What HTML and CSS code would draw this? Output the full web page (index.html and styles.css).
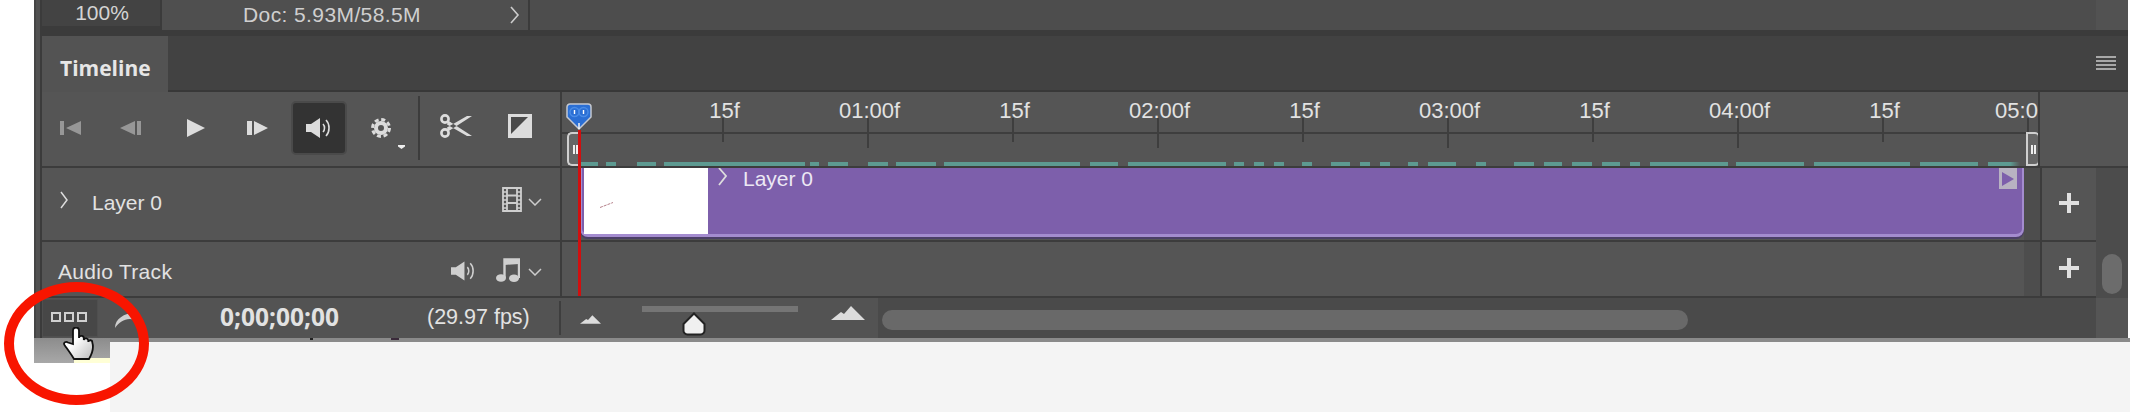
FILE: index.html
```html
<!DOCTYPE html>
<html lang="en">
<head>
    <meta charset="UTF-8">
    <title>Timeline</title>
    <link rel="stylesheet" href="styles.css">
</head>
<body>
    <div class="panel">
        <div class="panel-body">
            <div class="status">
                <div class="zoom-field">100%</div>
                <div class="doc-field">
                    <span>Doc: 5.93M/58.5M</span>
                    <svg class="doc-arrow" width="10" height="18" viewBox="0 0 10 18"><path d="M1 1l7 8-7 8" fill="none" stroke="#ccc" stroke-width="1.6"/></svg>
                </div>
                <div class="status-rest"></div>
                <div class="status-end"></div>
            </div>
            <div class="tabs">
                <div class="tab">Timeline</div>
                <div class="tabs-rest">
                    <div class="menu-icon"><i></i><i></i><i></i><i></i></div>
                </div>
            </div>

            <div class="ctl-row">
                <div class="controls">
                    <svg class="ic-first" width="21" height="16" viewBox="0 0 21 16"><path d="M0 1h4v14H0zM21 1v14L6 8z" fill="#979797"/></svg>
                    <svg class="ic-prev" width="21" height="16" viewBox="0 0 21 16"><path d="M15 1v14L0 8zM17 1h4v14h-4z" fill="#979797"/></svg>
                    <svg class="ic-play" width="18" height="18" viewBox="0 0 18 18"><path d="M0 0l18 9L0 18z" fill="#dcdcdc"/></svg>
                    <svg class="ic-next" width="21" height="16" viewBox="0 0 21 16"><path d="M0 1h5v14H0zM7 1l14 7-14 7z" fill="#dcdcdc"/></svg>
                    <div class="audio-btn">
                        <svg width="26" height="20" viewBox="0 0 26 20"><path d="M0 6h5l9-6v20l-9-6H0z" fill="#dcdcdc"/><path d="M17 6c2 2 2 6 0 8M20 2c4 4 4 12 0 16" fill="none" stroke="#dcdcdc" stroke-width="1.6"/></svg>
                    </div>
                    <svg class="ic-gear" width="20" height="20" viewBox="0 0 20 20"><circle cx="10" cy="10" r="5" fill="none" stroke="#dcdcdc" stroke-width="4"/><circle cx="10" cy="10" r="8.5" fill="none" stroke="#dcdcdc" stroke-width="3" stroke-dasharray="4 2.67"/></svg>
                    <svg class="ic-tri" width="7" height="4" viewBox="0 0 7 4"><path d="M0 0h7v1.500L3.500 4 0 1.500z" fill="#eee"/></svg>
                    <div class="ctl-sep"></div>
                    <svg class="ic-scissors" width="32" height="24" viewBox="0 0 32 24"><circle cx="5" cy="5" r="3.600" fill="none" stroke="#dcdcdc" stroke-width="2.600"/><circle cx="5" cy="19" r="3.600" fill="none" stroke="#dcdcdc" stroke-width="2.600"/><path d="M8 6.500L32 22h-5L7 10.500zM8 17.500L32 2h-5L7 13.500z" fill="#dcdcdc"/></svg>
                    <svg class="ic-trans" width="24" height="24" viewBox="0 0 24 24"><path d="M0 0h24v24H0z" fill="#dcdcdc"/><path d="M3 3h17L3 20z" fill="#4a4a4a"/></svg>
                </div>
                <div class="ruler">
                    <div class="ruler-line"></div>
                    <div class="cell"><span>15f</span><i></i></div>
                    <div class="cell major"><span>01:00f</span><i></i></div>
                    <div class="cell"><span>15f</span><i></i></div>
                    <div class="cell major"><span>02:00f</span><i></i></div>
                    <div class="cell"><span>15f</span><i></i></div>
                    <div class="cell major"><span>03:00f</span><i></i></div>
                    <div class="cell"><span>15f</span><i></i></div>
                    <div class="cell major"><span>04:00f</span><i></i></div>
                    <div class="cell"><span>15f</span><i></i></div>
                    <div class="cell major cell-last"><span>05:0</span><i></i></div>
                    <svg class="work-bar" width="1478" height="4" viewBox="562 0 1478 4">
                        <defs><linearGradient id="fadeEnd"><stop offset="0.700" stop-color="#5d9a91"/><stop offset="1" stop-color="#5d9a91" stop-opacity="0"/></linearGradient></defs>
                        <g fill="#5d9a91"><rect x="580" width="18" height="4"/><rect x="606" width="10" height="4"/><rect x="637" width="19" height="4"/><rect x="664" width="141" height="4"/><rect x="810" width="9" height="4"/><rect x="828" width="20" height="4"/><rect x="868" width="20" height="4"/><rect x="896" width="40" height="4"/><rect x="944" width="136" height="4"/><rect x="1090" width="28" height="4"/><rect x="1128" width="98" height="4"/><rect x="1234" width="10" height="4"/><rect x="1254" width="10" height="4"/><rect x="1274" width="10" height="4"/><rect x="1302" width="10" height="4"/><rect x="1331" width="19" height="4"/><rect x="1360" width="10" height="4"/><rect x="1380" width="10" height="4"/><rect x="1408" width="10" height="4"/><rect x="1428" width="28" height="4"/><rect x="1476" width="10" height="4"/><rect x="1514" width="20" height="4"/><rect x="1544" width="18" height="4"/><rect x="1572" width="20" height="4"/><rect x="1602" width="18" height="4"/><rect x="1630" width="10" height="4"/><rect x="1650" width="78" height="4"/><rect x="1736" width="68" height="4"/><rect x="1814" width="96" height="4"/><rect x="1920" width="58" height="4"/></g>
                        <rect x="1988" width="32" height="4" fill="url(#fadeEnd)"/>
                    </svg>
                    <div class="handle handle-in"><b></b></div>
                    <div class="handle handle-out"><b></b></div>
                </div>
                <div class="ctl-end"></div>
            </div>

            <div class="tracks">
                <div class="track-rows">
                    <div class="track track-video">
                        <div class="track-head">
                            <svg class="twisty" width="8" height="18" viewBox="0 0 8 18"><path d="M1 1l6 8-6 8" fill="none" stroke="#ddd" stroke-width="1.500"/></svg>
                            <span class="track-name">Layer 0</span>
                            <svg class="ic-film" width="20" height="25" viewBox="0 0 20 25"><path d="M1 1h18v23H1zM5 1v23M15 1v23M5 8.500h10M5 16h10" fill="none" stroke="#cfcfcf" stroke-width="1.800"/><path d="M1 5h4M1 9h4M1 13h4M1 17h4M1 21h4M15 5h4M15 9h4M15 13h4M15 17h4M15 21h4" stroke="#cfcfcf" stroke-width="1.300"/></svg>
                            <svg class="ic-down" width="14" height="8" viewBox="0 0 14 8"><path d="M1 1l6 6 6-6" fill="none" stroke="#ccc" stroke-width="1.500"/></svg>
                        </div>
                        <div class="track-body">
                            <div class="clip">
                                <div class="clip-thumb">
                                    <svg class="scribble" width="14" height="6" viewBox="0 0 14 6"><path d="M0 5.500L13 .5" stroke="#b5808a" stroke-width="1" stroke-dasharray="3 1"/></svg>
                                </div>
                                <svg class="clip-arrow" width="9" height="18" viewBox="0 0 9 18"><path d="M1 0l7 8-7 9" fill="none" stroke="#ddd" stroke-width="1.800"/></svg>
                                <span class="clip-name">Layer 0</span>
                                <div class="clip-end">
                                    <svg width="12" height="14" viewBox="0 0 12 14"><path d="M0 0l12 7-12 7z" fill="#7d5fab"/></svg>
                                </div>
                            </div>
                            <div class="track-end"></div>
                        </div>
                        <div class="track-add"><div class="plus"></div></div>
                    </div>
                    <div class="track track-audio">
                        <div class="track-head">
                            <span class="audio-name">Audio Track</span>
                            <svg class="ic-speaker" width="25" height="20" viewBox="0 0 26 20"><path d="M0 6h5l9-6v20l-9-6H0z" fill="#cfcfcf"/><path d="M17 6c2 2 2 6 0 8M20 2c4 4 4 12 0 16" fill="none" stroke="#cfcfcf" stroke-width="1.600"/></svg>
                            <svg class="ic-music" width="24" height="24" viewBox="0 0 24 24"><ellipse cx="5" cy="20" rx="5" ry="3.800" fill="#cfcfcf"/><ellipse cx="18" cy="20.200" rx="5" ry="3.800" fill="#cfcfcf"/><path d="M8.500 20V1.500H23V20" fill="none" stroke="#cfcfcf" stroke-width="2.400"/><path d="M8.500 2H23v4L8.500 7z" fill="#cfcfcf"/></svg>
                            <svg class="ic-down ic-down-audio" width="14" height="8" viewBox="0 0 14 8"><path d="M1 1l6 6 6-6" fill="none" stroke="#ccc" stroke-width="1.500"/></svg>
                        </div>
                        <div class="track-body">
                            <div class="track-fill"></div>
                            <div class="track-end"></div>
                        </div>
                        <div class="track-add"><div class="plus"></div></div>
                    </div>
                </div>
                <div class="vscroll"><div class="vscroll-thumb"></div></div>
            </div>

            <div class="bottom">
                <div class="bottom-left">
                    <div class="frames-btn"><i></i><i></i><i></i></div>
                    <svg class="ic-arc" width="20" height="15" viewBox="0 0 20 15"><path d="M0 15C0 6 9 0 20 0v7C12 4 5 8 0 15z" fill="#cfcfcf"/></svg>
                    <span class="timecode">0;00;00;00</span>
                    <span class="fps">(29.97 fps)</span>
                    <div class="bottom-sep"></div>
                    <svg class="ic-mtn-small" width="21" height="9" viewBox="0 0 34 14"><path d="M0 14l10-8 3 2 7-8 14 14z" fill="#dcdcdc"/></svg>
                    <div class="zoom-track">
                        <svg class="zoom-thumb" width="24" height="24" viewBox="0 0 24 24"><path d="M12 1.500L22.500 12v6a4 4 0 0 1-4 4.500h-13a4 4 0 0 1-4-4.500v-6z" fill="#f0f0f0" stroke="#222" stroke-width="2"/></svg>
                    </div>
                    <svg class="ic-mtn-big" width="34" height="14" viewBox="0 0 34 14"><path d="M0 14l10-8 3 2 7-8 14 14z" fill="#dcdcdc"/></svg>
                </div>
                <div class="hscroll"><div class="hscroll-thumb"></div></div>
                <div class="bottom-end"></div>
            </div>
        </div>

        <svg class="marker" width="26" height="27" viewBox="0 0 26 27"><path d="M4 1h18a3 3 0 0 1 3 3v10L13 26 1 14V4a3 3 0 0 1 3-3z" fill="#2b6fd4" stroke="#c4c8d0" stroke-width="1.500"/><circle cx="8.500" cy="9" r="4.500" fill="none" stroke="#4a8ce6" stroke-width="1.500"/><circle cx="17.500" cy="9" r="4.500" fill="none" stroke="#4a8ce6" stroke-width="1.500"/><path d="M8.500 7v4M17.500 7v4M13 20v6" stroke="#fff" stroke-width="1.400"/></svg>
        <div class="playhead"></div>
    </div>

    <div class="below">
        <div class="below-left">
            <div class="patch"><div class="patch-note"></div></div>
        </div>
        <div class="below-right">
            <div class="below-strip"><i></i><i></i></div>
        </div>
    </div>

    <svg class="hand" width="32" height="33" viewBox="0 0 32 33"><defs><linearGradient id="handFill" x1="0" y1="0" x2="1" y2="1"><stop offset="0.400" stop-color="#fff"/><stop offset="1" stop-color="#bbb"/></linearGradient></defs><path d="M10 17V3.500a3 3 0 0 1 6 0V11a2.400 2.400 0 0 1 4.800 .5V13a2.300 2.300 0 0 1 4.500 .5V15a2 2 0 0 1 4 .5C31 21 29 27 26 32H11C8 27 5 23 1.500 18 0 15.500 3 14 5 15.500z" fill="url(#handFill)" stroke="#111" stroke-width="1.800"/></svg>
    <div class="red-ring"></div>
</body>
</html>
```

FILE: styles.css
```css
* { box-sizing: border-box; }
body { margin: 0; width: 2130px; height: 412px; overflow: hidden; position: relative; background: #fff; font-family: "Liberation Sans", Arial, sans-serif; font-size: 21px; color: #e2e2e2; }
svg { display: block; flex: none; }

.panel { position: relative; margin-left: 34px; width: 2094px; height: 338px; background: #515151; border-left: 2px solid #454545; padding-left: 4px; }
.panel-body { height: 100%; border-left: 2px solid #3b3b3b; display: flex; flex-direction: column; }

/* status bar */
.status { height: 36px; flex: none; display: flex; background: #3b3b3b; }
.zoom-field { width: 118px; height: 26px; background: #434343; color: #d4d4d4; text-align: center; line-height: 26px; margin-right: 2px; padding-left: 2px; }
.doc-field { width: 366px; height: 30px; background: #4f4f4f; color: #cfcfcf; display: flex; align-items: center; padding-left: 81px; letter-spacing: 0.4px; }
.doc-arrow { margin-left: auto; margin-right: 8px; }
.status-rest { flex: 1; height: 30px; background: #4d4d4d; margin-left: 2px; }
.status-end { width: 32px; height: 30px; background: #525252; }

/* tab strip */
.tabs { height: 56px; flex: none; display: flex; background: #424242; }
.tab { width: 126px; background: #535353; padding-left: 18px; font-family: "Open Sans", sans-serif; font-weight: 700; font-size: 21px; line-height: 64px; color: #e6e6e6; }
.tabs-rest { flex: 1; border-bottom: 2px solid #383838; display: flex; justify-content: flex-end; padding: 20px 12px 0 0; }
.menu-icon { width: 20px; height: 14px; display: flex; flex-direction: column; justify-content: space-between; }
.menu-icon i { display: block; height: 2px; background: #a8a8a8; }

/* controls + ruler */
.ctl-row { height: 76px; flex: none; display: flex; background: #555; border-bottom: 2px solid #3c3c3c; }
.controls { width: 520px; flex: none; display: flex; align-items: center; padding-bottom: 2px; border-right: 2px solid #3c3c3c; }
.ic-first { margin-left: 18px; }
.ic-prev { margin-left: 39px; }
.ic-play { margin-left: 46px; }
.ic-next { margin-left: 42px; }
.audio-btn { margin-left: 23px; width: 56px; height: 54px; background: #333; border: 2px solid #4a4a4a; border-radius: 5px; display: flex; align-items: center; justify-content: center; }
.ic-gear { margin-left: 24px; }
.ic-tri { margin: 38px 0 0 7px; }
.ctl-sep { width: 2px; height: 64px; background: #3c3c3c; margin-left: 13px; }
.ic-scissors { margin-left: 20px; margin-top: -4px; }
.ic-trans { margin-left: 36px; margin-top: -4px; }

.ruler { position: relative; width: 1478px; flex: none; display: flex; padding-left: 90px; overflow: hidden; border-right: 2px solid #3c3c3c; font-size: 22px; }
.ruler-line { position: absolute; left: 0; right: 0; top: 40px; height: 2px; background: #3e3e3e; }
.cell { width: 145px; flex: none; display: flex; flex-direction: column; align-items: center; padding-top: 7px; }
.cell span { line-height: 24px; white-space: nowrap; }
.cell i { display: block; width: 2px; height: 24px; margin: -5px 3px 0 0; background: #3e3e3e; }
.cell.major i { height: 30px; }
.cell-last span { margin-right: 26px; }
.work-bar { position: absolute; left: 0; bottom: 0; }
.handle { position: absolute; top: 40px; width: 14px; height: 34px; background: #666; border: 2px solid #cfcfcf; display: flex; align-items: center; justify-content: center; }
.handle b { width: 5px; height: 9px; border-left: 2px solid #eee; border-right: 2px solid #eee; }
.handle-in { left: 5px; border-right: 0; border-radius: 5px 0 0 5px; }
.handle-out { left: 1464px; border-radius: 0 5px 5px 0; }
.ctl-end { flex: 1; }

/* tracks */
.tracks { height: 130px; flex: none; display: flex; }
.track-rows { flex: 1; display: flex; flex-direction: column; }
.track { display: flex; background: #555; border-bottom: 2px solid #3c3c3c; }
.track-video { height: 74px; }
.track-audio { height: 56px; }
.track-head { width: 520px; flex: none; display: flex; align-items: center; border-right: 2px solid #3c3c3c; }
.track-video .track-head { padding-bottom: 4px; }
.track-audio .track-head { padding-top: 5px; }
.twisty { margin-left: 18px; margin-top: -4px; }
.track-name { margin-left: 24px; margin-top: 2px; }
.ic-film { margin-left: auto; margin-top: -6px; }
.ic-down { margin-left: 6px; margin-right: 18px; }
.audio-name { margin-left: 16px; letter-spacing: 0.3px; }
.ic-speaker { margin-left: auto; margin-top: -2px; }
.ic-music { margin-left: 20px; margin-top: -4px; }
.ic-down-audio { margin-left: 8px; }

.track-body { width: 1478px; flex: none; display: flex; padding-left: 18px; }
.track-end { width: 16px; flex: none; background: #4d4d4d; margin-left: auto; }
.track-fill { flex: 1; }
.clip { position: relative; flex: 1; height: 69px; background: #7d5fab; border: solid #a48ccf; border-width: 0 2px 3px 2px; border-radius: 0 0 8px 8px; box-shadow: 0 2px 0 #4b3f66; display: flex; align-items: flex-start; }
.clip-thumb { width: 124px; height: 66px; background: #fff; margin-left: 2px; flex: none; padding: 34px 0 0 16px; }
.clip-arrow { margin-left: 10px; }
.clip-name { margin-left: 16px; line-height: 22px; color: #ece8f4; }
.clip-end { position: absolute; top: 0; right: 5px; width: 18px; height: 21px; background: #b8b2c2; display: flex; align-items: center; justify-content: center; }
.track-add { width: 56px; flex: none; border-left: 2px solid #3c3c3c; display: flex; align-items: center; justify-content: center; padding-bottom: 2px; }
.plus { width: 20px; height: 20px; background: linear-gradient(#e0e0e0, #e0e0e0) center / 20px 4px no-repeat, linear-gradient(#e0e0e0, #e0e0e0) center / 4px 20px no-repeat; }

.vscroll { width: 32px; flex: none; background: #4c4c4c; display: flex; justify-content: center; align-items: flex-end; padding: 0 0 4px 0; }
.vscroll-thumb { width: 20px; height: 40px; border-radius: 10px; background: #6c6c6c; }

/* bottom bar */
.bottom { height: 40px; flex: none; display: flex; }
.bottom-left { width: 836px; flex: none; background: #535353; display: flex; align-items: center; }
.frames-btn { width: 56px; height: 38px; background: #474747; border: 1px solid #4f4f4f; display: flex; justify-content: center; align-items: center; gap: 3px; flex: none; padding-right: 2px; padding-bottom: 3px; }
.frames-btn i { width: 10px; height: 10px; border: 2px solid #d0d0d0; }
.ic-arc { margin-left: 17px; margin-top: 4px; }
.timecode { font-family: "Open Sans", sans-serif; font-weight: 700; font-size: 24.500px; width: 118px; margin-left: 85px; margin-top: -3px; white-space: nowrap; }
.fps { margin-left: 89px; width: 103px; white-space: nowrap; margin-top: -2px; font-size: 21.500px; }
.bottom-sep { width: 2px; height: 34px; background: #3e3e3e; margin-left: 29px; }
.ic-mtn-small { margin-left: 19px; margin-top: 2px; }
.zoom-track { position: relative; width: 156px; height: 6px; background: #757575; margin-left: 41px; margin-top: -18px; }
.zoom-thumb { position: absolute; left: 40px; top: 6px; }
.ic-mtn-big { margin-left: 33px; margin-top: -10px; }
.hscroll { flex: 1; background: #4a4a4a; padding: 12px 0 0 4px; }
.hscroll-thumb { width: 806px; height: 20px; border-radius: 10px; background: #696969; }
.bottom-end { width: 32px; flex: none; background: #555; }

.marker { position: absolute; left: 530px; top: 103px; }
.playhead { position: absolute; left: 542px; top: 130px; width: 3px; height: 166px; background: #d10f0f; }

/* below the panel */
.below { display: flex; height: 74px; }
.below-left { width: 110px; flex: none; padding-left: 34px; }
.patch { height: 25px; background: linear-gradient(#8c8c8c, #a8a8a8); padding: 20px 0 0 40px; }
.patch-note { height: 5px; background: #ffffd6; }
.below-right { flex: 1; background: #f4f4f4; }
.below-strip { height: 4px; background: #8a8a8a; display: flex; }
.below-strip i { width: 3px; height: 2px; background: #222; margin-left: 200px; }
.below-strip i + i { width: 8px; margin-left: 78px; background: #3a2a3a; }

/* overlays */
.hand { position: absolute; left: 63px; top: 327px; }
.red-ring { position: absolute; left: 4px; top: 282px; width: 145px; height: 123px; border: 10px solid #f81500; border-radius: 50%; }
```
